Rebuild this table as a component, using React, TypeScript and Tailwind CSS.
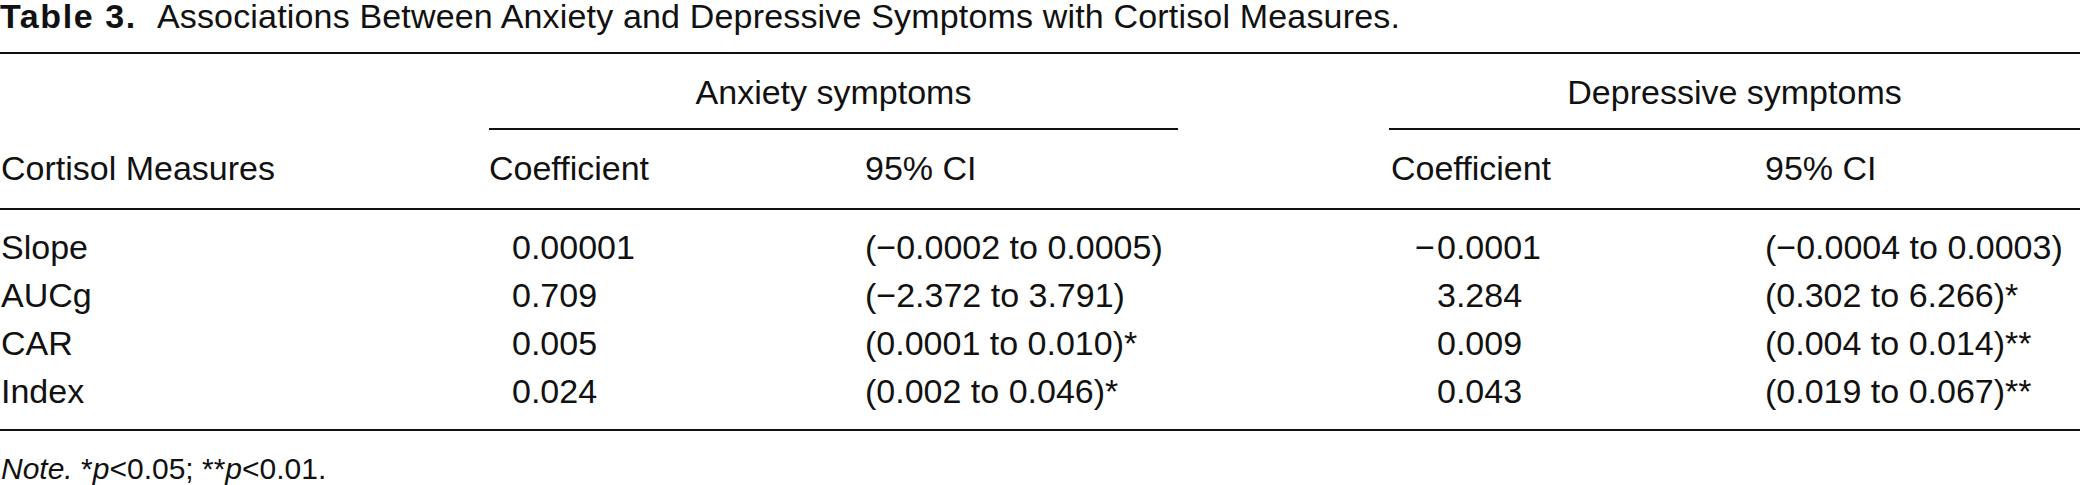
const rows = [
  { label: "Slope", a: "0.00001", aci: "(−0.0002 to 0.0005)", neg: true, d: "0.0001", dci: "(−0.0004 to 0.0003)" },
  { label: "AUCg", a: "0.709", aci: "(−2.372 to 3.791)", neg: false, d: "3.284", dci: "(0.302 to 6.266)*" },
  { label: "CAR", a: "0.005", aci: "(0.0001 to 0.010)*", neg: false, d: "0.009", dci: "(0.004 to 0.014)**" },
  { label: "Index", a: "0.024", aci: "(0.002 to 0.046)*", neg: false, d: "0.043", dci: "(0.019 to 0.067)**" },
];

const cols = "grid grid-cols-[489px_376px_313px_211px_376px_1fr]";

export default function App() {
  return (
    <div className="h-[485px] w-[2080px] overflow-hidden bg-white font-['Liberation_Sans',Arial,sans-serif] text-[34px] text-[#111]">
      {/* caption */}
      <p className="whitespace-nowrap pt-[1px] leading-[30px]">
        <span className="font-bold tracking-[1.6px]">Table 3.</span>
        <span className="ml-[20px] tracking-[0.17px]">Associations Between Anxiety and Depressive Symptoms with Cortisol Measures.</span>
      </p>

      <div className="mt-[21px] border-t-2 border-[#111]" />

      {/* spanning group headers */}
      <div className={cols}>
        <div className="col-span-2 col-start-2 whitespace-nowrap border-b-2 border-[#111] pb-[17px] pt-[19px] text-center leading-[38px]">
          Anxiety symptoms
        </div>
        <div className="col-span-2 col-start-5 whitespace-nowrap border-b-2 border-[#111] pb-[17px] pt-[19px] text-center leading-[38px]">
          Depressive symptoms
        </div>
      </div>

      {/* column headers */}
      <div className={`${cols} whitespace-nowrap border-b-2 border-[#111] pb-[21px] pt-[19px] leading-[38px]`}>
        <div className="pl-[1px]">Cortisol Measures</div>
        <div>Coefficient</div>
        <div>95% CI</div>
        <div />
        <div className="pl-[2px]">Coefficient</div>
        <div>95% CI</div>
      </div>

      {/* body */}
      <div className="border-b-2 border-[#111] pb-[14px] pt-[13px]">
        {rows.map((r) => (
          <div key={r.label} className={`${cols} whitespace-nowrap leading-[48px]`}>
            <div className="pl-[1px]">{r.label}</div>
            <div className="pl-[23px]">{r.a}</div>
            <div>{r.aci}</div>
            <div />
            <div className="pl-[26px]">
              <span className="inline-block w-[22px]">{r.neg ? "−" : ""}</span>
              {r.d}
            </div>
            <div>{r.dci}</div>
          </div>
        ))}
      </div>

      <p className="mt-[22px] whitespace-nowrap pl-[1px] text-[30px] leading-[32px]">
        <i>Note.</i> *<i>p</i>&lt;0.05; **<i>p</i>&lt;0.01.
      </p>
    </div>
  );
}
